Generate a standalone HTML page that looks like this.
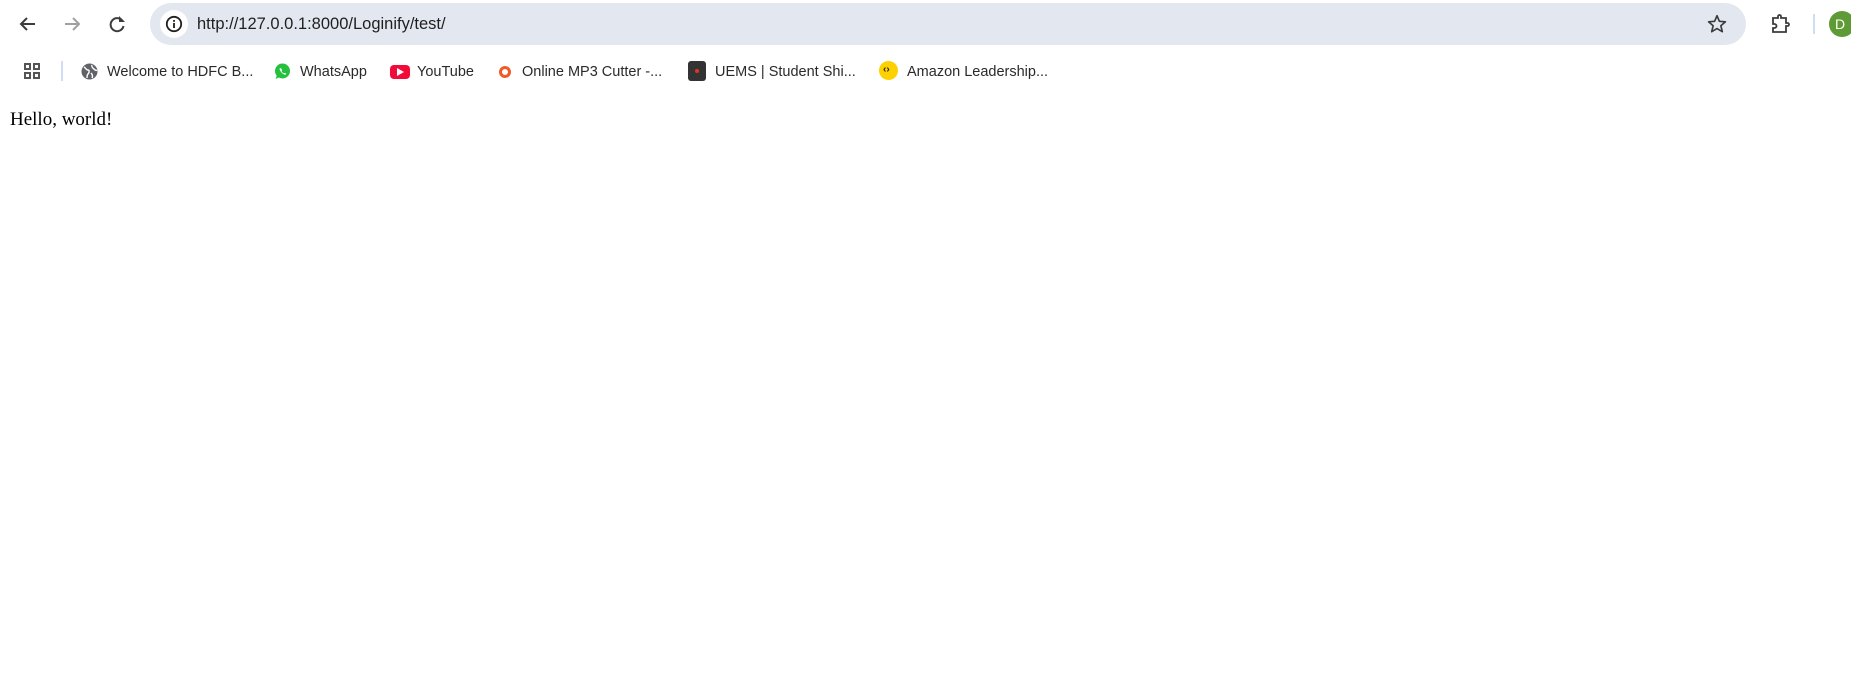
<!DOCTYPE html>
<html><head><meta charset="utf-8"><style>
*{margin:0;padding:0;box-sizing:border-box}
body{width:1851px;height:680px;background:#fff;position:relative;overflow:hidden;font-family:"Liberation Sans",sans-serif}
.a{position:absolute}
.bar{left:150px;top:3px;width:1596px;height:42px;background:#e3e8f0;border-radius:21px}
.url{left:197px;top:15px;font-size:16.5px;color:#1f1f1f}
.bm{top:64px;font-size:14.5px;color:#2a2a2a}
.hello{left:10px;top:109px;font-family:"Liberation Serif",serif;font-size:19px;color:#000}
</style></head><body>
<svg class="a" style="left:17px;top:13px" width="22" height="22" viewBox="0 0 22 22"><path d="M18 11H4M10 5l-6 6 6 6" stroke="#3c3c3c" stroke-width="2" fill="none"/></svg>
<svg class="a" style="left:61px;top:13px" width="22" height="22" viewBox="0 0 22 22"><path d="M4 11h14M12 5l6 6-6 6" stroke="#a0a0a0" stroke-width="2" fill="none"/></svg>
<svg class="a" style="left:106px;top:13px" width="22" height="22" viewBox="0 0 22 22"><path d="M16.5 8A6.5 6.5 0 1 0 17.5 13" stroke="#3c3c3c" stroke-width="2" fill="none"/><path d="M13 3v6h6z" fill="#3c3c3c"/></svg>
<div class="a bar"></div>
<div class="a" style="left:160px;top:10px;width:28px;height:28px;border-radius:50%;background:#fff"></div>
<svg class="a" style="left:165px;top:15px" width="18" height="18" viewBox="0 0 18 18"><circle cx="9" cy="9" r="7.2" stroke="#1f1f1f" stroke-width="1.8" fill="none"/><rect x="8.1" y="8" width="1.8" height="5" fill="#1f1f1f"/><rect x="8.1" y="5" width="1.8" height="1.8" fill="#1f1f1f"/></svg>
<div class="a url">http://127.0.0.1:8000/Loginify/test/</div>
<svg class="a" style="left:1706px;top:13px" width="22" height="22" viewBox="0 0 24 24"><path d="M12 3l2.6 6.1 6.6.5-5 4.3 1.6 6.5L12 17l-5.8 3.4 1.6-6.5-5-4.3 6.6-.5z" stroke="#3c3c3c" stroke-width="1.8" fill="none" stroke-linejoin="round"/></svg>
<svg class="a" style="left:1769px;top:13px" width="22" height="22" viewBox="0 0 22 22"><path d="M4 5h5V3.5a1.5 1.5 0 0 1 3 0V5h5v5h1.5a1.5 1.5 0 0 1 0 3H17v6H4v-4h1.5a2 2 0 0 0 0-4H4z" stroke="#3c3c3c" stroke-width="1.8" fill="none"/></svg>
<div class="a" style="left:1813px;top:14px;width:2px;height:20px;background:#cfdcf3"></div>
<div class="a" style="left:1829px;top:11px;width:26px;height:26px;border-radius:50%;background:#5f9b35;color:#fff;font-size:14px;line-height:26px;padding-left:6px">D</div>
<svg class="a" style="left:23px;top:62px" width="18" height="18" viewBox="0 0 18 18"><g fill="none" stroke="#555" stroke-width="2"><rect x="2" y="2" width="5" height="5"/><rect x="11" y="2" width="5" height="5"/><rect x="2" y="11" width="5" height="5"/><rect x="11" y="11" width="5" height="5"/></g></svg>
<div class="a" style="left:61px;top:61px;width:2px;height:20px;background:#cfdcf3"></div>
<svg class="a" style="left:81px;top:63px" width="17" height="17" viewBox="0 0 17 17"><circle cx="8.5" cy="8.5" r="8" fill="#5f6368"/><path d="M3 4c2 1 2 3 4 3s1 3 0 4-1 4-1 4M11 2c-1 2 1 3 2 4s2 2 3 1M10 10c1 1 2 3 1 5" stroke="#fff" stroke-width="1.4" fill="none"/></svg>
<div class="a bm" style="left:107px">Welcome to HDFC B...</div>
<svg class="a" style="left:274px;top:63px" width="17" height="17" viewBox="0 0 17 17"><circle cx="8.5" cy="8" r="7.5" fill="#25c13e"/><path d="M1.5 16l1.5-4 3 2z" fill="#25c13e"/><path d="M6 5c-1 1 0 3 2 5s4 2 4 1-1-1-1.5-1-1 .5-2-.5-1-1.5-.5-2S7 5 6 5z" fill="#fff"/></svg>
<div class="a bm" style="left:300px">WhatsApp</div>
<div class="a" style="left:390px;top:65px;width:20px;height:14px;border-radius:4px;background:#f20b38"></div>
<svg class="a" style="left:397px;top:68px" width="8" height="8" viewBox="0 0 8 8"><path d="M0 0l7 4-7 4z" fill="#fff"/></svg>
<div class="a bm" style="left:417px">YouTube</div>
<div class="a" style="left:499px;top:66px;width:12px;height:12px;border-radius:50%;border:3px solid #f05a28"></div>
<div class="a bm" style="left:522px">Online MP3 Cutter -...</div>
<div class="a" style="left:688px;top:61px;width:18px;height:20px;border-radius:3px;background:#333"></div>
<div class="a" style="left:695px;top:69px;width:4px;height:4px;border-radius:50%;background:#e5331c"></div>
<div class="a bm" style="left:715px">UEMS | Student Shi...</div>
<div class="a" style="left:879px;top:61px;width:19px;height:19px;border-radius:50%;background:#fdd000"></div>
<div class="a" style="left:883px;top:64px;font-size:10px;font-weight:bold;color:#222">‹›</div>
<div class="a bm" style="left:907px">Amazon Leadership...</div>
<div class="a hello">Hello, world!</div>
</body></html>
